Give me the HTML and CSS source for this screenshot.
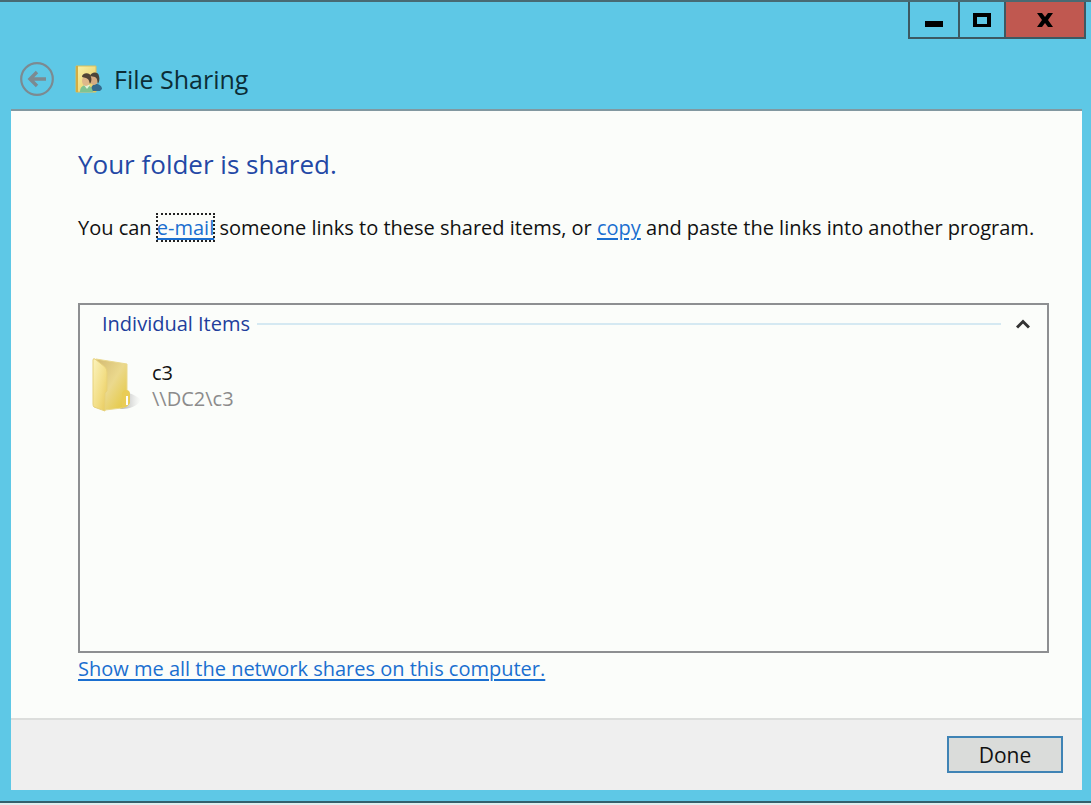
FILE: index.html
```html
<!DOCTYPE html>
<html lang="en">
<head>
<meta charset="utf-8">
<title>File Sharing</title>
<link rel="stylesheet" href="styles.css">
</head>
<body>
<div class="window">
  <header class="titlebar">
    <div class="controls">
      <button class="control minimize" aria-label="Minimize"><svg width="18" height="16" viewBox="0 0 18 16"><path d="M0 9h18v6H0z"/></svg></button>
      <button class="control maximize" aria-label="Maximize"><svg width="18" height="14" viewBox="0 0 18 14"><path fill-rule="evenodd" d="M0 0h18v14H0zM4 4v7h10V4z"/></svg></button>
      <button class="control close" aria-label="Close"><svg width="16" height="14" viewBox="0 0 16 14"><path d="M0 0h5l3 4 3-4h5l-5 7 5 7h-5l-3-4-3 4H0l5-7z"/></svg></button>
    </div>
    <div class="heading">
      <button class="back" aria-label="Back"><svg width="36" height="36" viewBox="0 0 36 36" fill="none" stroke="#7c8a91"><circle cx="18" cy="18" r="15.800" stroke-width="2.200"/><path d="M27 18H11M18 11l-7 7 7 7" stroke-width="3.400"/></svg></button>
      <svg class="app-icon" width="28" height="28" viewBox="0 0 28 28">
        <defs><linearGradient id="note" x2="1" y2="1"><stop stop-color="#faf3a8"/><stop offset="1" stop-color="#e5ca62"/></linearGradient></defs>
        <path d="M1 1h20v26H1z" fill="url(#note)" stroke="#d9c05e"/>
        <path d="M2 1v26" stroke="#d3ad43" stroke-width="2"/>
        <path d="M16 26c0-5 2-7 5-7s6 2 6 5l-2 2z" fill="#356b8e"/>
        <ellipse cx="19" cy="15" rx="4" ry="5" fill="#d5ac82"/>
        <path d="M15 11c1-4 8-5 9 0 1 3 0 6-1 8-1-3 0-5-3-7z" fill="#4b4539"/>
        <path d="M5 27c0-5 3-7 6-7s6 2 7 7z" fill="#80c391"/>
        <path d="M9 20l3 4 3-4z" fill="#e3f2d8"/>
        <ellipse cx="11" cy="16" rx="4" ry="5" fill="#dfb88a"/>
        <path d="M7 12c0-5 9-5 9 0 1 3 0 5-1 7-1-3-1-5-4-6z" fill="#514536"/>
      </svg>
      <h1 class="title">File Sharing</h1>
    </div>
  </header>
  <main class="content">
    <h2 class="status">Your folder is shared.</h2>
    <p class="message">You can <a class="link focused" href="#email">e-mail</a> someone links to these shared items, or <a class="link" href="#copy">copy</a> and paste the links into another program.</p>
    <section class="items">
      <div class="group">
        <h3 class="group-name">Individual Items</h3>
        <span class="rule"></span>
        <button class="collapse" aria-label="Collapse group"><svg width="14" height="10" viewBox="0 0 14 10" fill="none" stroke="#333" stroke-width="3"><path d="M1 8.500l6-6 6 6"/></svg></button>
      </div>
      <div class="item">
        <svg class="folder" width="50" height="56" viewBox="0 0 50 56">
          <defs>
            <linearGradient id="back" x2="1" y2="1"><stop stop-color="#d3ba72"/><stop offset=".5" stop-color="#ebd98d"/><stop offset="1" stop-color="#e4c637"/></linearGradient>
            <linearGradient id="front" x2="1" y2="1"><stop stop-color="#fbf3be"/><stop offset=".6" stop-color="#f2dd83"/><stop offset="1" stop-color="#e6c859"/></linearGradient>
            <linearGradient id="shade"><stop stop-color="#888" stop-opacity=".8"/><stop offset="1" stop-color="#ccc" stop-opacity="0"/></linearGradient>
          </defs>
          <path d="M28 52l8-16c5 1 10 4 13 7-4 6-10 9-21 9z" fill="url(#shade)"/>
          <path d="M4 2l31 5v42l-5 2-17 2z" fill="url(#back)" stroke="#ead98e"/>
          <path d="M30 51V36q1-3 4-3 4 0 4 4v9q-2 4-8 5z" fill="#e9cc56"/>
          <path d="M35 39v9" stroke="#fff" stroke-width="2"/>
          <path d="M1 3q0-2 2-1l10 8q2 2 2 5v19l-2 2v18L2 50q-1-1-1-3z" fill="url(#front)" stroke="#e7d17a"/>
        </svg>
        <div class="details">
          <span class="name">c3</span>
          <span class="path">\\DC2\c3</span>
        </div>
      </div>
    </section>
    <a class="link" href="#shares">Show me all the network shares on this computer.</a>
  </main>
  <footer class="footer"><button class="done">Done</button></footer>
</div>
</body>
</html>
```
FILE: styles.css
```css
* { box-sizing: border-box; }
body {
  margin: 0;
  padding-bottom: 2px;
  min-height: 100vh;
  display: flex;
  background: #dfeeee;
  color: #111;
  font-family: "Open Sans", "Noto Sans", sans-serif;
  font-size: 20px;
  line-height: 26px;
}
h1, h2, h3, p { margin: 0; font-weight: 400; }
button { margin: 0; padding: 0; border: 0; background: none; font: inherit; color: inherit; }
svg { display: block; flex: none; }
.window {
  flex: 1;
  min-width: 0;
  display: flex;
  flex-direction: column;
  padding: 0 9px 11px 11px;
  background: #5ec8e6;
  border-top: 2px solid #486a73;
  border-bottom: 2px solid #32616d;
}
.titlebar { display: flex; flex-direction: column; }
.controls {
  align-self: flex-end;
  display: flex;
  margin-right: -4px;
  height: 37px;
  border: solid #3c5962;
  border-width: 0 2px 2px;
}
.control { display: grid; place-items: center; width: 48px; }
.control + .control { border-left: 2px solid #3c5962; }
.maximize { width: 46px; }
.close { width: 80px; background: #c05850; }
.heading { display: flex; align-items: center; padding: 22px 8px 12px; }
.app-icon { margin: 0 11px 0 20px; }
.title { font-size: 25px; line-height: 36px; color: #0c2d36; }
.content {
  flex: 1;
  display: flex;
  flex-direction: column;
  align-items: flex-start;
  padding: 35px 33px 36px 67px;
  background: #fbfdfa;
  border-top: 2px solid #8298a0;
}
.status { font-size: 26px; line-height: 36px; color: #2348a5; }
.message { margin-top: 33px; }
.link { color: #1a6fd0; text-decoration-thickness: 2px; text-underline-offset: 3px; }
.focused { outline: 2px dotted #222; outline-offset: -1px; }
.items {
  flex: 1;
  align-self: stretch;
  margin-top: 62px;
  margin-bottom: 3px;
  padding: 6px 17px 16px 12px;
  border: 2px solid #8d8f91;
}
.group { display: flex; align-items: center; padding-left: 10px; }
.group-name { font-size: 20px; color: #213e9c; }
.rule { flex: 1; height: 2px; margin: 0 15px 0 7px; background: #d5e9f2; }
.item { display: flex; gap: 10px; margin-top: 20px; }
.details { display: flex; flex-direction: column; padding-top: 3px; }
.path { color: #8b8b8b; }
.footer {
  display: flex;
  justify-content: flex-end;
  padding: 16px 19px 17px;
  background: #efefef;
  border-top: 2px solid #dcdedc;
}
.done {
  width: 116px;
  height: 37px;
  border: 2px solid #3f83b5;
  background: #dadcda;
  font-size: 21px;
}
```
